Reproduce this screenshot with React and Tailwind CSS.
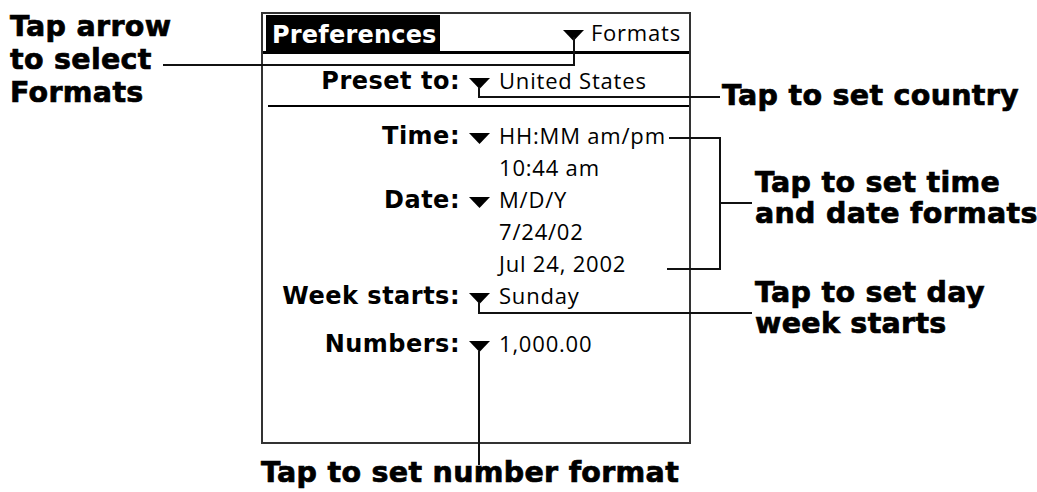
import React from "react"

function Arrow({ className = "" }) {
  return (
    <svg width="21" height="11" viewBox="0 0 21 11" className={`shrink-0 ${className}`}>
      <path d="M0 0H21L10.5 11Z" fill="black" />
    </svg>
  )
}

function Row({ label, value, arrow = true, className = "" }) {
  return (
    <div className={`flex items-baseline h-[32px] leading-[32px] ${className}`}>
      <span className="w-[197px] shrink-0 text-right font-['DejaVu_Sans',sans-serif] font-bold text-[24px] tracking-[0.5px] text-black whitespace-nowrap">
        {label}
      </span>
      {arrow ? <Arrow className="ml-[9px] mb-[1px]" /> : <span className="w-[30px] shrink-0" />}
      <span className="ml-[9px] font-['Open_Sans',sans-serif] text-[22px] tracking-[0.8px] text-black whitespace-nowrap">
        {value}
      </span>
    </div>
  )
}

function Leaders() {
  return (
    <svg className="absolute inset-0 pointer-events-none" width="1037" height="492" viewBox="0 0 1037 492">
      <g stroke="#111" strokeWidth="2" fill="none" shapeRendering="crispEdges">
        <path d="M163 65H574V37" />
        <path d="M479 87V97H720" />
        <path d="M669 138H720V269H667" />
        <path d="M720 203H752" />
        <path d="M479 302V313H752" />
        <path d="M479 351V465" />
      </g>
    </svg>
  )
}

export default function App() {
  const callout =
    "font-['DejaVu_Sans',sans-serif] font-bold text-[28.5px] tracking-[0.3px] text-black whitespace-nowrap [-webkit-text-stroke:0.7px_black]"
  return (
    <div className="relative w-[1037px] h-[492px] bg-white overflow-hidden">
      <div className="flex">
        <div className={`w-[261px] shrink-0 pl-[10px] pt-[10px] leading-[33px] ${callout}`}>
          <div>Tap arrow</div>
          <div>to select</div>
          <div>Formats</div>
        </div>

        <div className="w-[430px] shrink-0 flex flex-col">
          <div className="mt-[12px] h-[432px] border-2 border-[#333] bg-white flex flex-col">
            <div className="flex h-[37px]">
              <div className="ml-[3px] mt-[1px] w-[174px] bg-black pl-[6px] pt-[8px]">
                <span className="block leading-none font-['DejaVu_Sans',sans-serif] font-bold text-[24px] text-white tracking-[0.2px]">
                  Preferences
                </span>
              </div>
              <div className="flex-1 flex justify-end items-baseline pt-[7px] pr-[8px] leading-none">
                <Arrow className="mb-[2px]" />
                <span className="ml-[7px] font-['Open_Sans',sans-serif] text-[22px] tracking-[0.8px] text-black">
                  Formats
                </span>
              </div>
            </div>
            <div className="h-[3px] bg-black" />

            <Row className="mt-[10px]" label="Preset to:" value="United States" />
            <div className="mt-[9px] ml-[5px] h-[2px] bg-black" />

            <div className="mt-[12px] flex flex-col">
              <Row label="Time:" value="HH:MM am/pm" />
              <Row label="" arrow={false} value="10:44 am" />
              <Row label="Date:" value="M/D/Y" />
              <Row label="" arrow={false} value="7/24/02" />
              <Row label="" arrow={false} value="Jul 24, 2002" />
              <Row label="Week starts:" value="Sunday" />
              <Row className="mt-[16px]" label="Numbers:" value="1,000.00" />
            </div>
          </div>
          <div className={`mt-[12px] leading-[33px] ${callout}`}>Tap to set number format</div>
        </div>

        <div className="flex-1 flex flex-col">
          <div className={`mt-[79px] ml-[31px] leading-[33px] ${callout}`}>Tap to set country</div>
          <div className={`mt-[55px] ml-[64px] leading-[31px] ${callout}`}>
            <div>Tap to set time</div>
            <div>and date formats</div>
          </div>
          <div className={`mt-[48px] ml-[64px] leading-[31px] ${callout}`}>
            <div>Tap to set day</div>
            <div>week starts</div>
          </div>
        </div>
      </div>
      <Leaders />
    </div>
  )
}
